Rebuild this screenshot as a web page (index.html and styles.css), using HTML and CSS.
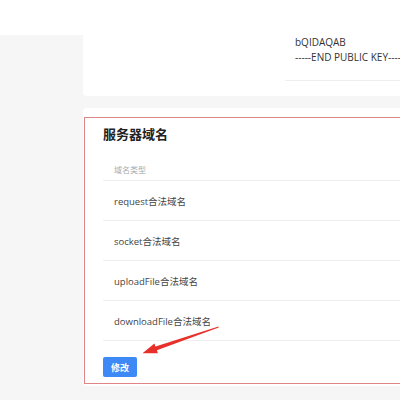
FILE: index.html
```html
<!DOCTYPE html>
<html lang="zh-CN">
<head>
<meta charset="UTF-8">
<meta name="viewport" content="width=device-width, initial-scale=1.0">
<link rel="stylesheet" href="styles.css">
<title>服务器域名</title>
</head>
<body>
<div class="topbar"></div>
<div class="main">
  <div class="card key-card">
    <div class="key-text">
      <div>bQIDAQAB</div>
      <div>-----END PUBLIC KEY-----</div>
    </div>
  </div>
  <div class="card domain-card">
    <div class="marked">
      <h2 class="title">服务器域名</h2>
      <div class="table">
        <div class="row head">域名类型</div>
        <div class="row">request合法域名</div>
        <div class="row">socket合法域名</div>
        <div class="row">uploadFile合法域名</div>
        <div class="row">downloadFile合法域名</div>
      </div>
      <button class="btn">修改</button>
    </div>
  </div>
</div>
<svg class="arrow" width="400" height="400" viewBox="0 0 400 400">
  <polygon fill="#e8302a" points="218.5,326.4 155.5,346.5 154.4,343.6 142.5,353.2 157.9,353.3 156.9,350.3 218.7,327.6"/>
</svg>
</body>
</html>
```
FILE: styles.css
```css
html, body {
  overflow: hidden;
}
body {
  margin: 0;
  width: 400px;
  height: 400px;
  position: relative;
  font-family: "Open Sans", "Noto Sans CJK SC", sans-serif;
  background-color: #f6f6f6;
  color: #444;
}
.topbar {
  height: 35px;
  background-color: #fff;
}
.main {
  padding-left: 83px;
}
.card {
  background-color: #fff;
  margin-right: -40px;
}
.key-card {
  height: 61px;
  border-bottom-left-radius: 4px;
}
.key-text {
  margin-left: 202px;
  padding-left: 10px;
  height: 45px;
  border-bottom: 1px solid #eee;
  font-size: 10px;
  line-height: 15px;
  color: #333;
  white-space: nowrap;
}
.domain-card {
  margin-top: 12px;
  padding: 9px 0 2px 1px;
  border-radius: 4px;
}
.marked {
  border: 1px solid #e08585;
  padding: 4px 0 6px 18px;
}
.title {
  margin: 0;
  font-size: 13px;
  line-height: 24px;
  font-weight: bold;
  color: #222;
}
.table {
  margin-top: 11px;
}
.row {
  height: 39px;
  line-height: 41px;
  padding-left: 11px;
  border-bottom: 1px solid #eee;
  font-size: 9.5px;
}
.row.head {
  height: 23px;
  line-height: 26px;
  font-size: 8px;
  color: #aaa;
}
.btn {
  display: block;
  margin-top: 16px;
  width: 34px;
  height: 20px;
  padding: 0;
  border: none;
  border-radius: 2px;
  background-color: #3d8af7;
  color: #fff;
  font-family: inherit;
  font-size: 9px;
  font-weight: bold;
}
.arrow {
  position: absolute;
  left: 0;
  top: 0;
}
```
